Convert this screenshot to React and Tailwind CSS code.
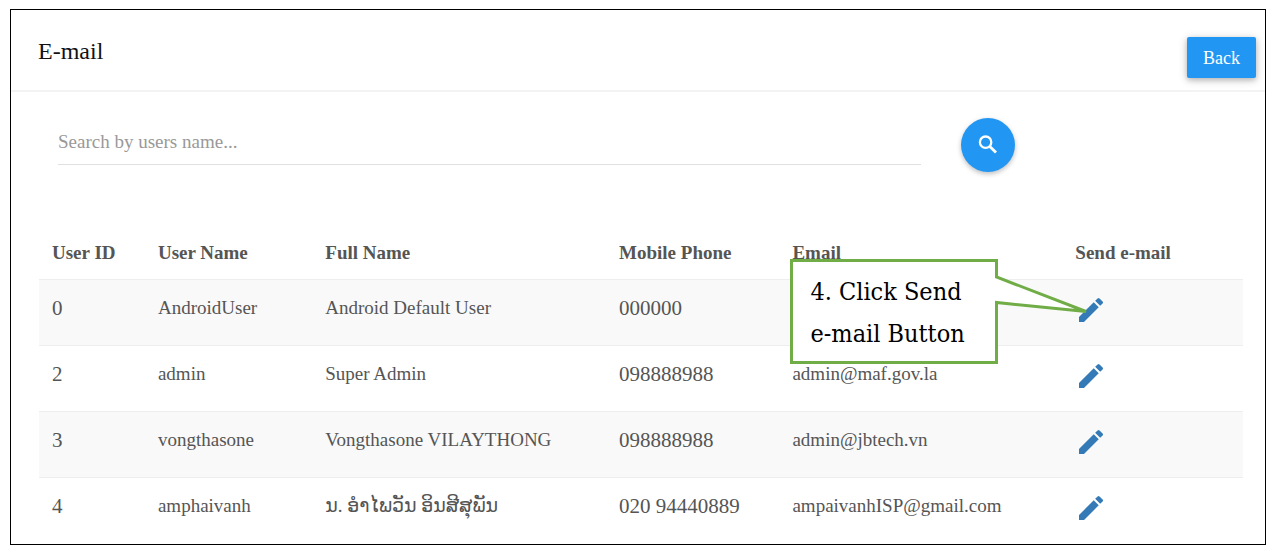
import { useState } from 'react'
import { MdEdit } from 'react-icons/md'

const users = [
  { id: '0', userName: 'AndroidUser', fullName: 'Android Default User', phone: '000000', email: '' },
  { id: '2', userName: 'admin', fullName: 'Super Admin', phone: '098888988', email: 'admin@maf.gov.la' },
  { id: '3', userName: 'vongthasone', fullName: 'Vongthasone VILAYTHONG', phone: '098888988', email: 'admin@jbtech.vn' },
  { id: '4', userName: 'amphaivanh', fullName: 'ນ. ອຳໄພວັນ ອິນສີສຸພັນ', phone: '020 94440889', email: 'ampaivanhISP@gmail.com' },
]

const columns = [
  { label: 'User ID', width: 'w-[8.8%]' },
  { label: 'User Name', width: 'w-[13.9%]' },
  { label: 'Full Name', width: 'w-[24.4%]' },
  { label: 'Mobile Phone', width: 'w-[14.4%]' },
  { label: 'Email', width: 'w-[23.5%]' },
  { label: 'Send e-mail', width: 'w-[15%]' },
]

function Callout() {
  return (
    <div className="absolute -top-[21px] left-[11px] z-10 w-[298px]">
      {/* Speech bubble with the tail pointing at the pencil */}
      <svg className="absolute top-0 left-0" width="300" height="105" viewBox="0 0 300 105" aria-hidden="true">
        <path d="M13 1.5H206.5V18L296 52.5L206.5 43.5V103.5H1.5V1.5Z" fill="#fff" stroke="#70ad47" strokeWidth="3" strokeMiterlimit="3" />
      </svg>
      <p className="relative px-5 pt-3 font-['DejaVu_Serif_Condensed','DejaVu_Serif',serif] text-[25px] leading-[42px] text-black">
        4. Click Send
        <br />
        e-mail Button
      </p>
    </div>
  )
}

export default function App() {
  const [search, setSearch] = useState('')

  return (
    <div className="bg-white py-[9px] pr-2 pl-2.5 font-['Liberation_Serif','DejaVu_Sans',serif] text-[#555]">
      <div className="border border-black">
        {/* Header */}
        <header className="flex items-center justify-between border-b-2 border-[#f3f3f3] pt-[27px] pr-[9px] pb-3 pl-[27px]">
          <h1 className="pb-[13px] text-2xl leading-7 text-[#111]">E-mail</h1>
          <button
            type="button"
            className="h-[41px] rounded-xs bg-[#2196f3] px-4 text-lg text-white shadow-[0_2px_5px_rgba(0,0,0,0.16),0_2px_10px_rgba(0,0,0,0.2)]"
          >
            Back
          </button>
        </header>

        <main className="px-7 pr-[22px]">
          {/* Search */}
          <form className="flex items-start gap-10 pt-[26px] pl-[19px]" onSubmit={(e) => e.preventDefault()}>
            <input
              type="text"
              aria-label="Search by users name"
              placeholder="Search by users name..."
              value={search}
              onChange={(e) => setSearch(e.target.value)}
              className="h-[47px] w-[72.8%] border-b border-[#e0e0e0] pt-0.5 text-[19px] outline-none placeholder:text-[#999]"
            />
            <button
              type="submit"
              aria-label="Search"
              className="flex size-[54px] items-center justify-center rounded-full bg-[#2196f3] text-white shadow-[0_2px_5px_rgba(0,0,0,0.26)]"
            >
              <svg className="size-6" viewBox="0 0 24 24" fill="none" stroke="currentColor" strokeWidth="2.3" aria-hidden="true">
                <circle cx="9.6" cy="9.2" r="5.7" />
                <path d="M13.8 13.4L20 19.6" strokeWidth="2.8" />
              </svg>
            </button>
          </form>

          {/* Users */}
          <table className="mt-14 w-full table-fixed text-left text-[19px] leading-[26px]">
            <thead>
              <tr>
                {columns.map((col) => (
                  <th key={col.label} scope="col" className={`${col.width} pt-3 pb-[13px] pl-[13px] font-bold`}>
                    {col.label}
                  </th>
                ))}
              </tr>
            </thead>
            <tbody>
              {users.map((user) => (
                <tr key={user.id} className="h-[66px] border-t border-[#eee] align-top odd:bg-[#f9f9f9]">
                  <td className="pt-[15px] pl-[13px] text-[21px]">{user.id}</td>
                  <td className="pt-[15px] pl-[13px]">{user.userName}</td>
                  <td className="pt-[15px] pl-[13px]">{user.fullName}</td>
                  <td className="pt-[15px] pl-[13px] text-[21px]">{user.phone}</td>
                  <td className="relative pt-[15px] pl-[13px]">
                    {user.email}
                    {user.id === '0' && <Callout />}
                  </td>
                  <td className="pt-[14px] pl-[13px]">
                    <a href="#send" aria-label={`Send e-mail to ${user.userName}`} className="inline-block text-[#337ab7]">
                      <MdEdit className="size-8" />
                    </a>
                  </td>
                </tr>
              ))}
            </tbody>
          </table>
        </main>
      </div>
    </div>
  )
}
